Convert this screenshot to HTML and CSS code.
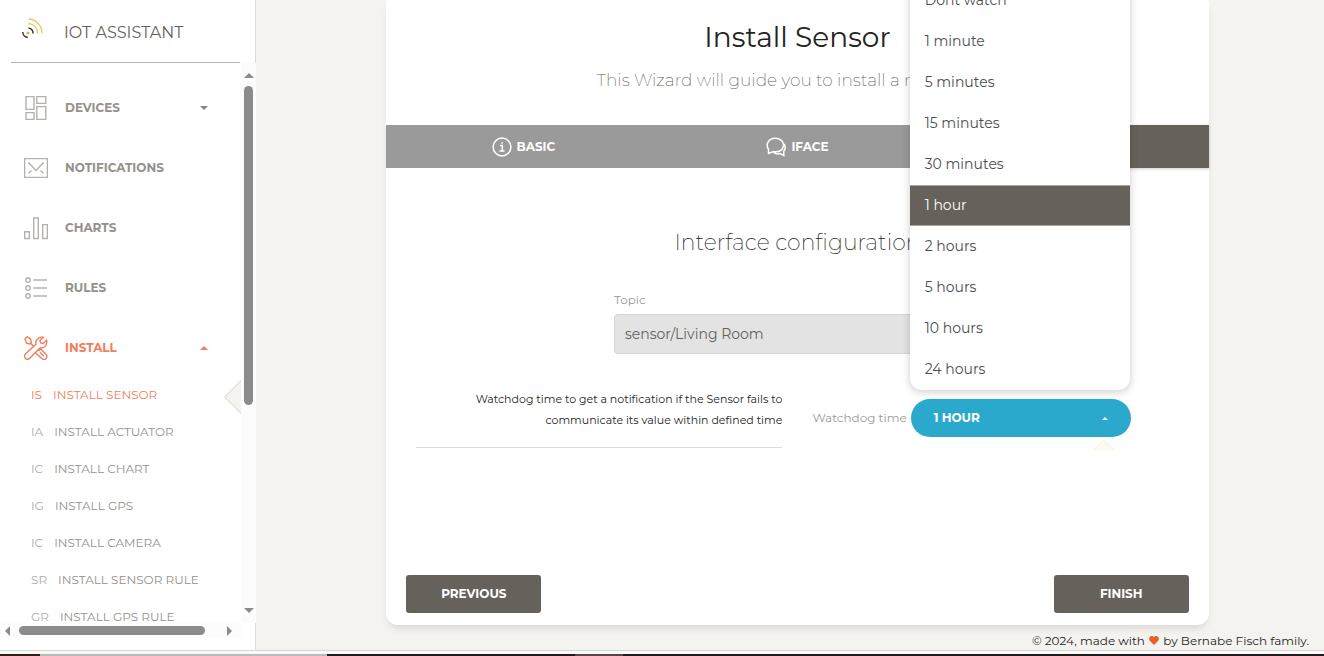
FILE: index.html
```html
<!DOCTYPE html>
<html lang="en">
<head>
<meta charset="utf-8">
<title>IoT Assistant</title>
<link rel="stylesheet" href="styles.css">
</head>
<body>
<div class="app">
  <aside class="sidebar">
    <a class="brand" href="#">
      <svg class="brand-logo" viewBox="0 0 22 22" fill="none" stroke-width="1.3">
        <g stroke="#2b3a45" stroke-width="1.5"><path d="M6.500 10a5 5 0 0 1 4.500 5.500M.8 14a5.500 5.500 0 0 0 5 5.500"/></g>
        <g stroke="#f6c36b"><path d="M6.500 5.500a9.500 9.500 0 0 1 9 10M6.500 1a14 14 0 0 1 13.500 14.500"/></g>
        <circle cx="6" cy="15" r="1.600" fill="#f6a93b"/>
      </svg>
      <span>IOT ASSISTANT</span>
    </a>
    <div class="scroller">
      <nav class="menu">
        <a class="item" href="#">
          <svg class="icon" viewBox="0 0 24 24"><path d="M2 .6h8v12.800H2zM12.800.6h9v6.800h-9zM2 16.600h8v6.800H2zM12.800 10.600h9v12.800h-9z"/></svg>
          <span>DEVICES</span><i class="caret down"></i>
        </a>
        <a class="item" href="#">
          <svg class="icon" viewBox="0 0 24 24"><path d="M.6 2.600h22.800v18.800H.6zM4.500 6.500l7.500 8 7.500-8M4.500 17.500l3-3M19.500 17.500l-3-3"/></svg>
          <span>NOTIFICATIONS</span>
        </a>
        <a class="item" href="#">
          <svg class="icon" viewBox="0 0 24 24"><path d="M.7 15.700h4.600v6.800H.7zM9.700 2h4.600v20.500H9.700zM18.700 8.600h4.600v13.900h-4.600z"/></svg>
          <span>CHARTS</span>
        </a>
        <a class="item" href="#">
          <svg class="icon" viewBox="0 0 24 24"><circle cx="4" cy="4" r="2.200"/><circle cx="4" cy="12" r="2.200"/><circle cx="4" cy="20" r="2.200"/><path d="M9.500 4H23M9.500 12H23M9.500 20H23"/></svg>
          <span>RULES</span>
        </a>
        <a class="item active" href="#">
          <svg class="icon" viewBox="0 0 24 24"><path d="M1 2.800 3.200.8 6.500 3l.8 3.500-1.500 1.400-3.300-.7zM6.600 7.200l3.600 3.600M14.500 15l2-2 5.500 5.200a3 3 0 0 1-4.200 4.300L11 16.500M16 16.300l3.800 3.700M14.400 13.500 5.800 22.200a2.900 2.900 0 0 1-4.500-4.100L12 8.200C11 4.500 14.500.2 19.200 1.300L16 4.500l.5 2.500 2.700.5 3.300-3.200c1.200 4.600-2 8.300-6.500 7.600l-1.600 1.600M4 19.800h.2"/></svg>
          <span>INSTALL</span><i class="caret up"></i>
        </a>
        <a class="sub active" href="#"><span class="mini">IS</span><span>INSTALL SENSOR</span></a>
        <a class="sub" href="#"><span class="mini">IA</span><span>INSTALL ACTUATOR</span></a>
        <a class="sub" href="#"><span class="mini">IC</span><span>INSTALL CHART</span></a>
        <a class="sub" href="#"><span class="mini">IG</span><span>INSTALL GPS</span></a>
        <a class="sub" href="#"><span class="mini">IC</span><span>INSTALL CAMERA</span></a>
        <a class="sub" href="#"><span class="mini">SR</span><span>INSTALL SENSOR RULE</span></a>
        <a class="sub" href="#"><span class="mini">GR</span><span>INSTALL GPS RULE</span></a>
      </nav>
      <div class="vbar"><i class="arrow north"></i><i class="thumb"></i><i class="arrow south"></i></div>
      <div class="hbar"><i class="arrow west"></i><i class="thumb"></i><i class="arrow east"></i></div>
    </div>
  </aside>
  <main class="main">
    <section class="card">
      <header class="head">
        <h1>Install Sensor</h1>
        <p>This Wizard will guide you to install a new sensor</p>
      </header>
      <nav class="tabs">
        <a href="#"><svg viewBox="0 0 20 20"><circle cx="10" cy="10" r="8.900"/><path d="M8 8.500h2.300v5.500M7.500 14h5M10 5.200v1.600"/></svg>BASIC</a>
        <a href="#"><svg viewBox="0 0 20 20"><path d="M2.500 16.500v-4C-1 7 3 1.200 9 1.200s9.500 4.300 8.300 8.500c-1 4-5.300 5.800-9.800 4.900zM18 7c2 3 1.200 5.500-.2 7v4.500l-3.600-2c-2.500.8-5 .4-6.700-1.500"/></svg>IFACE</a>
        <a class="current" href="#" aria-label="Next step"></a>
      </nav>
      <h2>Interface configuration</h2>
      <div class="field">
        <label for="topic">Topic</label>
        <input id="topic" value="sensor/Living Room" disabled>
      </div>
      <div class="watch">
        <p class="hint">Watchdog time to get a notification if the Sensor fails to communicate its value within defined time</p>
        <label for="watchdog">Watchdog time</label>
        <div class="picker">
          <button id="watchdog" class="pick" type="button" aria-expanded="true">1 HOUR<i class="caret up"></i></button>
          <svg class="tip" viewBox="0 0 22 12"><path d="M0 11.500 11 .8l11 10.700z" fill="#fffaf0"/><path d="M0 11.500 11 .8l11 10.700" fill="none" stroke="#f6efe8"/></svg>
          <ul class="options" role="listbox">
            <li role="option">Dont watch</li>
            <li role="option">1 minute</li>
            <li role="option">5 minutes</li>
            <li role="option">15 minutes</li>
            <li role="option">30 minutes</li>
            <li role="option" class="selected" aria-selected="true">1 hour</li>
            <li role="option">2 hours</li>
            <li role="option">5 hours</li>
            <li role="option">10 hours</li>
            <li role="option">24 hours</li>
          </ul>
        </div>
      </div>
      <footer class="actions">
        <button type="button">PREVIOUS</button>
        <button type="button">FINISH</button>
      </footer>
    </section>
    <footer class="credit">© 2024, made with <svg viewBox="0 0 10 9"><path fill="#eb5e28" d="M5 9 .8 4.800C-1 2.500.8 0 2.800 0 4 0 4.700.7 5 1.300 5.300.7 6 0 7.200 0c2 0 3.800 2.500 2 4.800z"/></svg> by Bernabe Fisch family.</footer>
  </main>
</div>
<div class="taskbar"></div>
</body>
</html>
```
FILE: styles.css
```css
* { box-sizing: border-box; }
body {
  margin: 0;
  height: 100vh;
  display: flex;
  flex-direction: column;
  overflow: hidden;
  background: #f4f3ef;
  color: #252422;
  font: 12px/20px Montserrat, Inter, sans-serif;
}
a { color: inherit; text-decoration: none; }
button, input { font: inherit; }

.app { flex: 1; min-height: 0; display: flex; border-bottom: 1px solid #d8d7d4; }
.sidebar {
  width: 256px;
  flex: none;
  display: flex;
  flex-direction: column;
  background: #fff;
  border-right: 1px solid #dddcd9;
  padding-bottom: 12px;
}
.brand {
  display: flex;
  align-items: center;
  gap: 20px;
  height: 63px;
  margin: 0 15px 0 11px;
  padding: 4px 0 0 11px;
  flex: none;
  border-bottom: 1px solid #b5b4b1;
  color: #66615b;
  font-size: 16px;
  font-weight: 400;
}
.brand-logo { width: 22px; height: 22px; margin-bottom: 8px; }

.scroller {
  flex: 1;
  min-height: 0;
  margin-right: -1px;
  display: grid;
  grid-template: minmax(0, 1fr) 15px / minmax(0, 1fr) 15px;
}
.menu { overflow: hidden; padding-top: 15px; color: #94918b; }
.item { display: flex; align-items: center; height: 60px; padding: 0 33px 0 24px; gap: 17px; font-weight: 700; }
.item.active, .sub.active { color: #f17e5d; }
.icon { width: 24px; height: 24px; fill: none; stroke: #b5b2ad; stroke-width: 1.4; flex: none; }
.item.active .icon { stroke: #f17e5d; }
.caret { margin-left: auto; border: 4px solid transparent; }
.caret.down { border-top-color: #88857f; border-bottom: 0; }
.caret.up { border-bottom-color: currentColor; border-top: 0; }
.sub { position: relative; display: flex; gap: 11px; height: 37px; line-height: 34px; padding-left: 31px; white-space: nowrap; }
.mini { opacity: .75; }
.sub.active .mini { opacity: 1; }
.sub.active::after {
  content: "";
  position: absolute;
  right: -12px;
  top: 7px;
  width: 22px;
  height: 22px;
  background: #f4f3ef;
  border: 1px solid #dddcd9;
  transform: rotate(45deg);
}
.vbar { display: flex; flex-direction: column; align-items: center; padding: 10px 0; background: #fcfcfc; }
.vbar .thumb { width: 9px; height: 59%; margin-top: 8px; border-radius: 5px; background: #8b8b8b; }
.hbar { display: flex; align-items: center; padding: 0 9px 0 5px; background: #fcfcfc; }
.hbar .thumb { height: 9px; width: 82%; margin-left: 9px; border-radius: 5px; background: #8b8b8b; }
.arrow { border: 5px solid transparent; }
.north { border-bottom-color: #8b8b8b; border-top: 0; }
.south { border-top-color: #8b8b8b; border-bottom: 0; margin-top: auto; }
.west { border-right-color: #8b8b8b; border-left: 0; }
.east { border-left-color: #8b8b8b; border-right: 0; margin-left: auto; }

.main { flex: 1; display: flex; flex-direction: column; min-width: 0; }
.card {
  width: 77%;
  flex: 1;
  align-self: center;
  margin-left: 15px;
  display: flex;
  flex-direction: column;
  background: #fff;
  border-radius: 3px 3px 12px 12px;
  box-shadow: 0 6px 10px -4px rgba(0, 0, 0, .15);
}
.head { height: 125px; padding-top: 17px; text-align: center; }
h1 { margin: 0; font-size: 28px; font-weight: 400; line-height: 40px; }
.head p { margin: 12px 0 0; font-size: 17px; font-weight: 200; line-height: 22px; color: #66615b; }
.tabs { display: grid; grid-template-columns: repeat(3, 1fr); height: 43px; background: #9a9a9a; color: #fff; font-weight: 700; }
.tabs a { display: flex; align-items: center; justify-content: center; gap: 5px; }
.tabs svg { width: 20px; height: 20px; fill: none; stroke: #fff; stroke-width: 1.5; }
.tabs .current { background: #66615b; box-shadow: 0 1px 3px rgba(0, 0, 0, .2); }
h2 { margin: 60px 0 0; text-align: center; font-size: 22px; font-weight: 200; line-height: 30px; }
.field { width: 100%; max-width: 367px; margin: 32px auto 0; display: flex; flex-direction: column; }
.field label { color: #9a9a9a; }
.field input {
  height: 40px;
  margin-top: 4px;
  padding: 0 10px;
  border: 1px solid #d5d5d5;
  border-radius: 4px;
  background: #e3e3e3;
  color: #66615b;
  font-size: 14px;
}
.watch { display: flex; align-items: flex-start; margin: 35px 78px 0 30px; }
.hint {
  flex: 1;
  margin: 0 30px 0 0;
  padding: 0 0 16px 50px;
  border-bottom: 1px solid #dddddd;
  text-align: right;
  font-size: 11px;
  line-height: 21px;
}
.watch label { margin: 19px 4px 0 0; color: #9a9a9a; }
.picker { position: relative; width: 220px; margin-top: 10px; }
.pick {
  width: 100%;
  height: 38px;
  display: flex;
  align-items: center;
  padding: 0 23px;
  border: 0;
  border-radius: 20px;
  background: #2ba9cd;
  color: #fff;
  font-weight: 700;
}
.pick .caret { border-width: 0 3px 3px; }
.tip { position: absolute; top: 40px; right: 16px; width: 22px; height: 12px; }
.options {
  position: absolute;
  z-index: 2;
  bottom: 47px;
  right: 1px;
  width: 100%;
  margin: 0;
  padding: 0;
  list-style: none;
  background: #fff;
  border-radius: 12px;
  box-shadow: 0 2px 8px rgba(0, 0, 0, .2);
  color: #4c4d50;
  font-size: 14px;
}
.options li { height: 41px; padding: 0 15px; line-height: 41px; }
.options .selected { background: #66615b; box-shadow: inset 0 1px #a8a39d, inset 0 -1px #a8a39d; color: #fff; }
.actions { display: flex; justify-content: space-between; margin-top: auto; padding: 0 20px 12px; }
.actions button { width: 135px; height: 38px; border: 0; border-radius: 3px; background: #66615b; color: #fff; font-weight: 700; }
.credit { height: 25px; padding: 6px 15px 0 0; text-align: right; line-height: 20px; }
.credit svg { width: 10px; height: 9px; margin: 0 1px; }
.taskbar { height: 5px; flex: none; border-top: 3px solid #f9f9f9; background: linear-gradient(90deg, #351a18 40px, #bbb 40px 327px, #241a1e 327px 575px, #594446 575px 623px, #241a1e 623px); }
```
